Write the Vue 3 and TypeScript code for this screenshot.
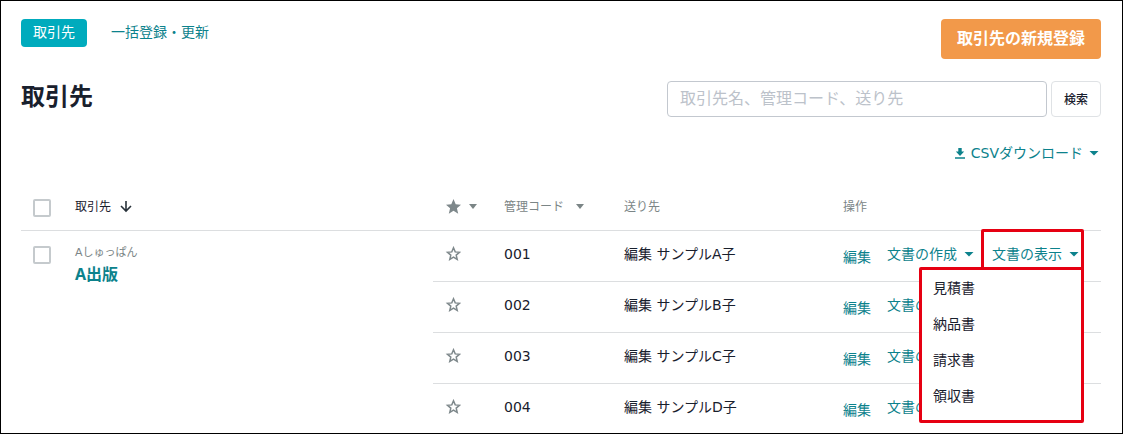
<script setup lang="ts">
import { ref } from 'vue'

interface Recipient {
  code: string
  name: string
}

const query = ref('')
const recipients: Recipient[] = [
  { code: '001', name: '編集 サンプルA子' },
  { code: '002', name: '編集 サンプルB子' },
  { code: '003', name: '編集 サンプルC子' },
  { code: '004', name: '編集 サンプルD子' },
]
const documents: string[] = ['見積書', '納品書', '請求書', '領収書']
const openCode = ref('001')

function toggle(code: string): void {
  openCode.value = openCode.value === code ? '' : code
}
</script>

<template>
  <main class="page">
    <header class="top">
      <nav class="tabs">
        <a class="tab active" href="#partners">取引先</a>
        <a class="tab" href="#bulk">一括登録・更新</a>
      </nav>
      <button class="create" type="button">取引先の新規登録</button>
    </header>

    <section class="heading">
      <h1>取引先</h1>
      <form class="search" @submit.prevent>
        <input v-model="query" type="text" aria-label="検索キーワード" placeholder="取引先名、管理コード、送り先" />
        <button type="submit">検索</button>
      </form>
    </section>

    <div class="tools">
      <button class="link csv" type="button">
        <svg class="download" viewBox="0 0 10 11" aria-hidden="true">
          <path d="M3.3 0h3.4v3.6H9.2L5 8 .8 3.600h2.5zM0 9.200h10v1.600H0z" />
        </svg>
        <span>CSVダウンロード</span>
        <i class="caret"></i>
      </button>
    </div>

    <table>
      <colgroup>
        <col class="c-check" />
        <col />
        <col class="c-star" />
        <col class="c-code" />
        <col class="c-send" />
        <col class="c-ops" />
      </colgroup>
      <thead>
        <tr>
          <th><input class="check" type="checkbox" aria-label="すべて選択" /></th>
          <th>
            <button class="sort current" type="button">
              取引先
              <svg class="arrow" viewBox="0 0 12 12" aria-hidden="true">
                <path d="M6 0v10M1 5l5 5 5-5" />
              </svg>
            </button>
          </th>
          <th>
            <button class="sort stars" type="button" aria-label="お気に入り">
              <svg class="star full" viewBox="0 0 16 16" aria-hidden="true">
                <path d="M8.500 0l2.200 5.200 5.300.5-4.100 3.500 1.300 5.500-4.700-2.900-4.700 2.900 1.300-5.500L1 5.700l5.300-.5z" />
              </svg>
              <i class="caret small"></i>
            </button>
          </th>
          <th>
            <button class="sort code" type="button">管理コード<i class="caret small"></i></button>
          </th>
          <th>送り先</th>
          <th>操作</th>
        </tr>
      </thead>
      <tbody>
        <tr v-for="(item, index) in recipients" :key="item.code">
          <template v-if="index === 0">
            <td class="first" :rowspan="recipients.length">
              <input class="check" type="checkbox" aria-label="A出版を選択" />
            </td>
            <td class="first" :rowspan="recipients.length">
              <div class="kana">Aしゅっぱん</div>
              <a class="company" href="#a">A出版</a>
            </td>
          </template>
          <td>
            <button class="fav" type="button" aria-label="お気に入りに追加">
              <svg class="star" viewBox="0 0 16 16" aria-hidden="true">
                <path d="M8.500 1.800l1.700 4.100 4.300.4-3.300 2.800 1 4.300-3.700-2.300-3.700 2.300 1-4.300-3.300-2.800 4.300-.4z" />
              </svg>
            </button>
          </td>
          <td>{{ item.code }}</td>
          <td>{{ item.name }}</td>
          <td>
            <div class="ops">
              <a class="edit" href="#edit">編集</a>
              <button class="link" type="button">文書の作成<i class="caret"></i></button>
              <div class="dropdown" :class="{ open: openCode === item.code }">
                <button class="link" type="button" @click="toggle(item.code)">
                  文書の表示<i class="caret"></i>
                </button>
                <ul v-if="openCode === item.code" class="menu">
                  <li v-for="doc in documents" :key="doc"><a href="#doc">{{ doc }}</a></li>
                </ul>
              </div>
            </div>
          </td>
        </tr>
      </tbody>
    </table>
  </main>
</template>

<style>
body {
  margin: 0;
}
</style>

<style scoped>
* {
  box-sizing: border-box;
}
.page {
  height: 100vh;
  overflow: hidden;
  padding: 18px 21px 0 20px;
  border: 1px solid #000;
  background: #fff;
  color: #19202d;
  font-family: "DejaVu Sans", "Noto Sans CJK JP", sans-serif;
  font-size: 14px;
  line-height: 20px;
}
button {
  font: inherit;
  color: inherit;
  padding: 0;
  border: 0;
  background: none;
  cursor: pointer;
}
a {
  color: #0c828c;
  text-decoration: none;
}
.top {
  display: flex;
  justify-content: space-between;
  align-items: flex-start;
}
.tabs {
  display: flex;
  gap: 12px;
}
.tab {
  padding: 3px 12px 5px;
  border-radius: 4px;
}
.tab.active {
  background: #00abbd;
  color: #fff;
}
.create {
  height: 40px;
  padding: 0 16px;
  border-radius: 4px;
  background: #f2994a;
  color: #fff;
  font-size: 16px;
  font-weight: 700;
}
.heading {
  display: flex;
  justify-content: space-between;
  align-items: center;
  margin-top: 22px;
}
h1 {
  margin: 0;
  padding-bottom: 4px;
  font-size: 24px;
  line-height: 32px;
  font-weight: 700;
}
.search {
  display: flex;
  gap: 4px;
}
.search input {
  width: 380px;
  height: 36px;
  padding: 0 12px 2px;
  border: 1px solid #c3c8cf;
  border-radius: 4px;
  font: inherit;
  font-size: 16px;
}
.search input::placeholder {
  color: #bcc2ca;
  opacity: 1;
}
.search button {
  padding: 2px 12px 0;
  border: 1px solid #dfe2e5;
  border-radius: 4px;
  font-size: 12px;
  font-weight: 500;
}
.tools {
  display: flex;
  justify-content: flex-end;
  margin: 26px 2px 0 0;
}
.link {
  display: flex;
  align-items: center;
  gap: 7px;
  height: 20px;
  color: #0c828c;
  white-space: nowrap;
}
.download {
  width: 10px;
  height: 11px;
  fill: #0c828c;
}
.caret {
  width: 10px;
  height: 5px;
  background: currentColor;
  clip-path: polygon(0 0, 100% 0, 50% 100%);
}
.csv {
  gap: 6px;
}
.caret.small {
  width: 8px;
  height: 5px;
}
table {
  width: 100%;
  margin-top: 20px;
  border-collapse: separate;
  border-spacing: 0;
  table-layout: fixed;
}
.c-check {
  width: 42px;
}
.c-star {
  width: 59px;
}
.c-code {
  width: 120px;
}
.c-send {
  width: 219px;
}
.c-ops {
  width: 270px;
}
th {
  height: 48px;
  padding: 0 12px;
  border-bottom: 1px solid #dcdee0;
  color: #7b8586;
  font-size: 12px;
  font-weight: 400;
  text-align: left;
}
td {
  height: 51px;
  padding: 0 12px 4px;
  border-bottom: 1px solid #dcdee0;
}
td.first {
  padding-top: 12px;
  vertical-align: top;
}
.check {
  display: block;
  appearance: none;
  width: 18px;
  height: 18px;
  margin: 3px 0 0;
  border: 2px solid #c5cacd;
  border-radius: 2px;
  background: #fff;
}
.sort {
  display: flex;
  align-items: center;
  gap: 9px;
}
.sort.stars {
  gap: 8px;
}
.sort.code {
  gap: 12px;
}
.sort.current {
  color: #19202d;
}
.arrow {
  width: 12px;
  height: 12px;
  fill: none;
  stroke: #28323a;
  stroke-width: 1.6;
}
.star {
  display: block;
  width: 16px;
  height: 16px;
  fill: none;
  stroke: #7e888b;
  stroke-width: 1.5;
}
.star.full {
  fill: #7e888b;
  stroke: none;
}
.kana {
  color: #7b8586;
  font-size: 11px;
}
.company {
  display: block;
  padding-top: 1px;
  font-family: "Noto Sans", "Noto Sans CJK JP", sans-serif;
  font-size: 16px;
  font-weight: 700;
}
.fav {
  display: block;
}
.ops {
  display: flex;
  align-items: center;
  gap: 16px;
}
.edit {
  padding-top: 6px;
}
.dropdown {
  position: relative;
  margin-left: 2px;
}
.dropdown.open::before {
  content: "";
  position: absolute;
  top: -15px;
  right: -5px;
  left: -11px;
  height: 41px;
  border: 3px solid #e60012;
  border-radius: 2px;
  pointer-events: none;
}
.menu {
  position: absolute;
  z-index: 1;
  top: 23px;
  right: -5px;
  width: 165px;
  margin: 0;
  padding: 0 0 6px;
  border: 3px solid #e60012;
  border-radius: 2px;
  background: #fff;
  list-style: none;
}
.menu a {
  display: block;
  padding: 8px 11px;
  color: #19202d;
}
</style>
